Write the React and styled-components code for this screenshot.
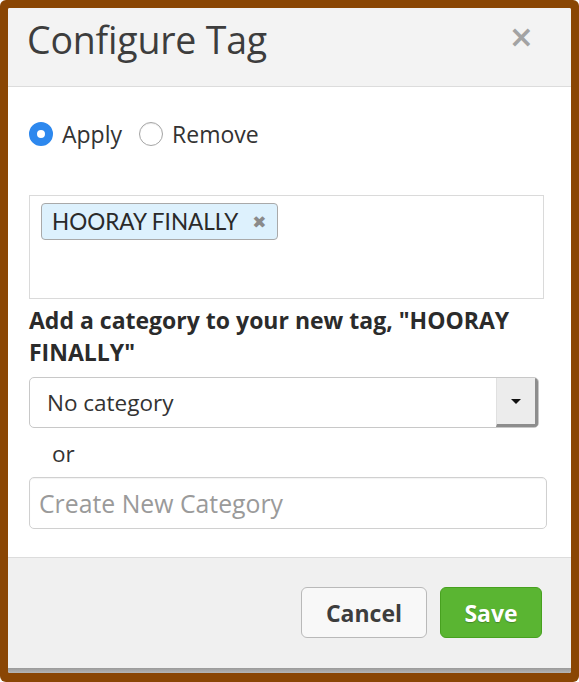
import React from "react";
import styled, { createGlobalStyle } from "styled-components";

const Global = createGlobalStyle`
  html, body { margin: 0; padding: 0; background: #fff; }
  * { box-sizing: border-box; }
`;

const Frame = styled.div`
  width: 579px;
  height: 682px;
  background: #8a4604;
  border-radius: 6px;
  padding: 8px 8px 9px 8px;
  display: flex;
`;

const Modal = styled.div`
  flex: 1;
  display: flex;
  flex-direction: column;
  background: #fff;
  font-family: "Open Sans", "DejaVu Sans", sans-serif;
  color: #333;
  border-radius: 2px;
  overflow: hidden;
`;

const Header = styled.div`
  height: 79px;
  background: #f3f3f3;
  border-bottom: 1px solid #dcdcdc;
  display: flex;
  align-items: flex-start;
  justify-content: space-between;
  padding: 7px 37px 0 19px;
`;

const Title = styled.h1`
  margin: 0;
  font-size: 37.5px;
  font-weight: 400;
  line-height: 50px;
  color: #3d3d3d;
  letter-spacing: -0.2px;
`;

const Close = styled.span`
  font-family: "DejaVu Sans", sans-serif;
  font-size: 30px;
  font-weight: 700;
  color: #a3a3a3;
  line-height: 36px;
  margin-top: 4px;
`;

const Body = styled.div`
  flex: 1;
  padding: 29px 24px 0 21px;
  display: flex;
  flex-direction: column;
  border-bottom: 1px solid #dcdcdc;
`;

const RadioRow = styled.div`
  display: flex;
  align-items: center;
  height: 36px;
  gap: 9px;
`;

const RadioOption = styled.label`
  display: flex;
  align-items: center;
  gap: 9px;
  font-size: 23px;
  color: #333;
  margin-right: 8px;
`;

const RadioDot = styled.span`
  width: 24px;
  height: 24px;
  border-radius: 50%;
  box-sizing: border-box;
  ${(p) =>
    p.$checked
      ? `background: #fff; border: 8px solid #2d88ee;`
      : `background: #fff; border: 1px solid #a5a5a5; box-shadow: inset 0 1px 1px rgba(0,0,0,0.08);`}
`;

const TagBox = styled.div`
  margin-top: 43px;
  height: 104px;
  margin-right: 3px;
  border: 1px solid #dadada;
  padding: 7px 11px;
`;

const Tag = styled.span`
  display: inline-flex;
  align-items: center;
  gap: 14px;
  height: 37px;
  padding: 0 10px 0 10px;
  background: #ddf1fd;
  border: 1px solid #a9a9a9;
  border-radius: 4px;
  font-family: "Lato", "Open Sans", sans-serif;
  font-size: 22.5px;
  color: #2a2a2a;
`;

const TagRemove = styled.span`
  font-family: "DejaVu Sans", sans-serif;
  font-size: 17px;
  font-weight: 700;
  color: #8a8a8a;
`;

const Label = styled.div`
  margin-top: 5px;
  font-size: 23px;
  font-weight: 700;
  line-height: 32px;
  color: #2b2b2b;
  padding-right: 20px;
`;

const Select = styled.div`
  margin-top: 9px;
  margin-right: 8px;
  height: 51px;
  border: 1px solid #c8c8c8;
  border-radius: 5px;
  display: flex;
  overflow: hidden;
`;

const SelectValue = styled.div`
  flex: 1;
  display: flex;
  align-items: center;
  padding-left: 17px;
  font-size: 22.5px;
  color: #333;
`;

const SelectButton = styled.div`
  width: 42px;
  background: #ececec;
  border-left: 1px solid #e0e0e0;
  border-right: 3px solid #8d8d8d;
  border-bottom: 3px solid #8d8d8d;
  display: flex;
  align-items: center;
  justify-content: center;
`;

const Caret = styled.span`
  width: 0;
  height: 0;
  border-left: 5px solid transparent;
  border-right: 5px solid transparent;
  border-top: 5px solid #111;
`;

const Or = styled.div`
  margin-top: 6px;
  padding-left: 23px;
  font-size: 22.5px;
  line-height: 40px;
  color: #333;
`;

const Input = styled.input`
  margin-top: 3px;
  height: 52px;
  border: 1px solid #d0d0d0;
  border-radius: 5px;
  padding: 0 9px;
  font-family: "Open Sans", sans-serif;
  font-size: 24.8px;
  color: #333;
  outline: none;
  box-shadow: inset 0 1px 1px rgba(0,0,0,0.05);
  &::placeholder { color: #9a9a9a; }
`;

const Footer = styled.div`
  height: 110px;
  background: #f0f0f0;
  display: flex;
  justify-content: flex-end;
  align-items: flex-start;
  gap: 13px;
  padding: 29px 29px 0 0;
`;

const Button = styled.button`
  height: 51px;
  border-radius: 6px;
  font-family: "Open Sans", sans-serif;
  font-size: 23px;
  font-weight: 700;
  padding: 0;
  ${(p) =>
    p.$primary
      ? `width: 102px; background: #5ab532; border: 1px solid #47a11f; color: #fff; text-shadow: 0 1px 1px rgba(0,0,0,0.25);`
      : `width: 126px; background: #f8f8f8; border: 1px solid #b9b9b9; color: #3d3d3d;`}
`;

const BottomStrip = styled.div`
  height: 5px;
  background: linear-gradient(#9a9a9a, #b5b5b5);
`;

export default function App() {
  return (
    <>
      <Global />
      <Frame>
        <Modal>
          <Header>
            <Title>Configure Tag</Title>
            <Close>×</Close>
          </Header>
          <Body>
            <RadioRow>
              <RadioOption>
                <RadioDot $checked />
                Apply
              </RadioOption>
              <RadioOption>
                <RadioDot />
                Remove
              </RadioOption>
            </RadioRow>
            <TagBox>
              <Tag>
                HOORAY FINALLY
                <TagRemove>✖</TagRemove>
              </Tag>
            </TagBox>
            <Label>Add a category to your new tag, "HOORAY FINALLY"</Label>
            <Select>
              <SelectValue>No category</SelectValue>
              <SelectButton>
                <Caret />
              </SelectButton>
            </Select>
            <Or>or</Or>
            <Input placeholder="Create New Category" />
          </Body>
          <Footer>
            <Button>Cancel</Button>
            <Button $primary>Save</Button>
          </Footer>
          <BottomStrip />
        </Modal>
      </Frame>
    </>
  );
}
